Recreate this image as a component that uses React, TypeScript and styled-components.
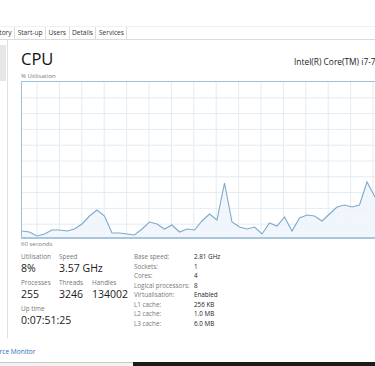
import React from 'react';
import styled, {createGlobalStyle} from 'styled-components';

const GlobalStyle = createGlobalStyle`
  html, body {
    margin: 0;
    padding: 0;
    background: #ffffff;
  }
  body {
    font-family: "Open Sans", "Noto Sans", "Liberation Sans", sans-serif;
    color: #1a1a1a;
  }
`;

// samples taken every ~7.5px, value is y inside a 158px tall graph (0 = top)
const SAMPLES: number[] = [
    149, 150, 154, 152, 148, 148, 149, 147, 142, 134, 128, 134, 151, 151, 152, 153,
    147, 140, 142, 147, 143, 150, 147, 148, 139, 132, 138, 101, 140, 145, 147, 145,
    152, 141, 144, 135, 149, 136, 133, 134, 139, 132, 125, 123, 125, 123, 100, 114,
    127, 127, 127,
];

const TABS = ['App history', 'Start-up', 'Users', 'Details', 'Services'];

const SPECS: [string, string][] = [
    ['Base speed:', '2.81 GHz'],
    ['Sockets:', '1'],
    ['Cores:', '4'],
    ['Logical processors:', '8'],
    ['Virtualisation:', 'Enabled'],
    ['L1 cache:', '256 KB'],
    ['L2 cache:', '1.0 MB'],
    ['L3 cache:', '6.0 MB'],
];

function UsageGraph() {
    const w = 400;
    const h = 158;
    const step = 7.5;
    const pts = SAMPLES.map((v, i) => `${(i * step).toFixed(1)},${v}`);
    const line = pts.join(' ');
    const area = `0,${h} ${line} ${((SAMPLES.length - 1) * step).toFixed(1)},${h}`;
    const vLines = [];
    for (let x = 15; x < w; x += 22.4) vLines.push(x);
    const hLines = [];
    for (let y = 15.8; y < h - 2; y += 15.8) hLines.push(y);

    return (
        <GraphBox>
            <svg width={w} height={h} viewBox={`0 0 ${w} ${h}`}>
                {vLines.map((x) => (
                    <line key={'v' + x} x1={x} y1={0} x2={x} y2={h} stroke="#e2ecf4" strokeWidth={1}/>
                ))}
                {hLines.map((y) => (
                    <line key={'h' + y} x1={0} y1={y} x2={w} y2={y} stroke="#e2ecf4" strokeWidth={1}/>
                ))}
                <polygon points={area} fill="#edf4fa" fillOpacity={0.85}/>
                <polyline points={line} fill="none" stroke="#7fa9c9" strokeWidth={1.1}/>
            </svg>
        </GraphBox>
    );
}

function App() {
    return (
        <Page>
            <GlobalStyle/>
            <TopSpace/>
            <TabBar>
                {TABS.map((t, i) => (
                    <Tab key={t} first={i === 0}>{t}</Tab>
                ))}
            </TabBar>
            <Body>
                <Sidebar>
                    <SelectedItem/>
                </Sidebar>
                <Main>
                    <Header>
                        <Title>CPU</Title>
                        <Model>Intel(R) Core(TM) i7-7700HQ CPU @ 2.80GHz</Model>
                    </Header>
                    <SmallLabel>% Utilisation</SmallLabel>
                    <UsageGraph/>
                    <SmallLabel>60 seconds</SmallLabel>
                    <Stats>
                        <LiveStats>
                            <StatLabel>Utilisation</StatLabel>
                            <StatLabel span>Speed</StatLabel>
                            <StatValue>8%</StatValue>
                            <StatValue span>3.57 GHz</StatValue>
                            <StatLabel>Processes</StatLabel>
                            <StatLabel>Threads</StatLabel>
                            <StatLabel>Handles</StatLabel>
                            <StatValue>255</StatValue>
                            <StatValue>3246</StatValue>
                            <StatValue>134002</StatValue>
                            <StatLabel wide>Up time</StatLabel>
                            <StatValue wide>0:07:51:25</StatValue>
                        </LiveStats>
                        <Specs>
                            {SPECS.map(([k, v]) => (
                                <React.Fragment key={k}>
                                    <SpecKey>{k}</SpecKey>
                                    <SpecValue>{v}</SpecValue>
                                </React.Fragment>
                            ))}
                        </Specs>
                    </Stats>
                </Main>
            </Body>
            <Footer>
                <MonitorLink>Open Resource Monitor</MonitorLink>
            </Footer>
            <Taskbar>
                <TaskbarLeft/>
                <TaskbarRight/>
            </Taskbar>
        </Page>
    );
}

const Page = styled.div`
  width: 375px;
  height: 366px;
  overflow: hidden;
  display: flex;
  flex-direction: column;
  background: #ffffff;
`;

const TopSpace = styled.div`
  height: 26px;
  flex-shrink: 0;
`;

const TabBar = styled.div`
  height: 12px;
  flex-shrink: 0;
  display: flex;
  border-top: 1px solid #f0f0f0;
  border-bottom: 1px solid #dcdcdc;
`;

const Tab = styled.div<{ first?: boolean }>`
  font-size: 6.6px;
  line-height: 12px;
  color: #333;
  padding: 0 2.5px;
  white-space: nowrap;
  border-right: 1px solid #dcdcdc;
  margin-left: ${(p) => (p.first ? '-26px' : '0')};
`;

const Body = styled.div`
  display: flex;
  height: 298px;
  flex-shrink: 0;
`;

const Sidebar = styled.div`
  width: 8px;
  flex-shrink: 0;
  border-right: 1px solid #e0e0e0;
  padding-top: 5px;
  box-sizing: border-box;
`;

const SelectedItem = styled.div`
  width: 6px;
  height: 36px;
  background: #e6e6e6;
`;

const Main = styled.div`
  flex: 1;
  padding-left: 13px;
  min-width: 0;
  display: flex;
  flex-direction: column;
`;

const Header = styled.div`
  display: grid;
  grid-template-columns: 273px auto;
  align-items: end;
  height: 30px;
  margin-top: 2px;
`;

const Title = styled.div`
  font-size: 16.5px;
  line-height: 20px;
  color: #111;
  padding-bottom: 3px;
`;

const Model = styled.div`
  font-size: 8.4px;
  line-height: 12px;
  color: #222;
  white-space: nowrap;
  padding-bottom: 4px;
`;

const SmallLabel = styled.div`
  font-size: 6px;
  line-height: 9px;
  color: #777;
  height: 9px;
`;

const GraphBox = styled.div`
  width: 420px;
  height: 158px;
  border-top: 1px solid #9cc0dc;
  border-left: 1px solid #9cc0dc;
  border-bottom: 2px solid #a9c6dd;
  overflow: hidden;
  box-sizing: border-box;
  margin-bottom: 1px;

  svg {
    display: block;
  }
`;

const Stats = styled.div`
  display: flex;
  margin-top: 3px;
`;

const LiveStats = styled.div`
  width: 113px;
  display: grid;
  grid-template-columns: 38px 33px auto;
  align-content: start;
`;

const StatLabel = styled.div<{ span?: boolean; wide?: boolean }>`
  font-size: 6.4px;
  line-height: 9px;
  color: #777;
  white-space: nowrap;
  grid-column: ${(p) => (p.wide ? '1 / 4' : p.span ? '2 / 4' : 'auto')};
`;

const StatValue = styled.div<{ span?: boolean; wide?: boolean }>`
  font-size: 10.5px;
  line-height: 15px;
  color: #1a1a1a;
  white-space: nowrap;
  margin-bottom: 2px;
  grid-column: ${(p) => (p.wide ? '1 / 4' : p.span ? '2 / 4' : 'auto')};
`;

const Specs = styled.div`
  display: grid;
  grid-template-columns: 60px auto;
  grid-auto-rows: 9.5px;
  align-content: start;
`;

const SpecKey = styled.div`
  font-size: 6.3px;
  line-height: 9.5px;
  color: #777;
  white-space: nowrap;
`;

const SpecValue = styled.div`
  font-size: 6.3px;
  line-height: 9.5px;
  color: #222;
  white-space: nowrap;
`;

const Footer = styled.div`
  height: 24px;
  flex-shrink: 0;
  display: flex;
  align-items: center;
  overflow: hidden;
`;

const MonitorLink = styled.span`
  font-size: 6.6px;
  color: #2a6db5;
  white-space: nowrap;
  margin-left: -38px;
  margin-top: 2px;
`;

const Taskbar = styled.div`
  flex: 1;
  display: flex;
`;

const TaskbarLeft = styled.div`
  width: 133px;
  background: #f3f3f3;
  border-top: 1px solid #c8c8c8;
`;

const TaskbarRight = styled.div`
  flex: 1;
  background: #1b1b1b;
`;

export default App;
